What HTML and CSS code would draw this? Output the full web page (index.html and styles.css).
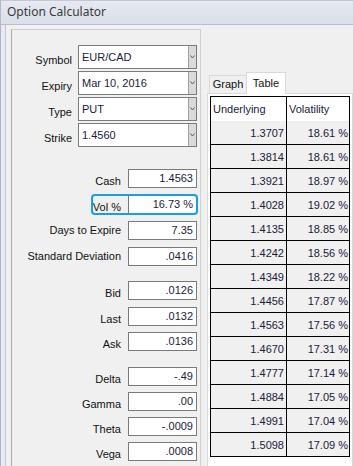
FILE: index.html
```html
<!DOCTYPE html>
<html lang="en">
<head>
    <meta charset="UTF-8">
    <meta name="viewport" content="width=device-width, initial-scale=1.0">
    <title>Option Calculator</title>
    <link rel="stylesheet" href="styles.css">
</head>
<body>
    <div class="window">
        <div class="titlebar">Option Calculator</div>
        <div class="client">
            <div class="content">
                <div class="panel">
                    <div class="combo-row">
                        <span class="lbl">Symbol</span>
                        <div class="combo"><span class="combo-text">EUR/CAD</span><span class="drop"><svg width="5" height="4" viewBox="0 0 5 4"><polyline points="0.5,0.5 2.5,3 4.5,0.5" fill="none" stroke="#5a5a5a"/></svg></span></div>
                    </div>
                    <div class="combo-row">
                        <span class="lbl">Expiry</span>
                        <div class="combo"><span class="combo-text">Mar 10, 2016</span><span class="drop"><svg width="5" height="4" viewBox="0 0 5 4"><polyline points="0.5,0.5 2.5,3 4.5,0.5" fill="none" stroke="#5a5a5a"/></svg></span></div>
                    </div>
                    <div class="combo-row">
                        <span class="lbl">Type</span>
                        <div class="combo"><span class="combo-text">PUT</span><span class="drop"><svg width="5" height="4" viewBox="0 0 5 4"><polyline points="0.5,0.5 2.5,3 4.5,0.5" fill="none" stroke="#5a5a5a"/></svg></span></div>
                    </div>
                    <div class="combo-row">
                        <span class="lbl">Strike</span>
                        <div class="combo"><span class="combo-text">1.4560</span><span class="drop"><svg width="5" height="4" viewBox="0 0 5 4"><polyline points="0.5,0.5 2.5,3 4.5,0.5" fill="none" stroke="#5a5a5a"/></svg></span></div>
                    </div>

                    <div class="group g1">
                        <div class="field"><span class="lbl">Cash</span><span class="box">1.4563</span></div>
                        <div class="field vol"><span class="hl"><span class="lbl">Vol %</span><span class="box">16.73 %</span></span></div>
                        <div class="field mid"><span class="lbl">Days to Expire</span><span class="box">7.35</span></div>
                        <div class="field mid"><span class="lbl">Standard Deviation</span><span class="box">.0416</span></div>
                    </div>
                    <div class="group g2">
                        <div class="field"><span class="lbl">Bid</span><span class="box">.0126</span></div>
                        <div class="field"><span class="lbl">Last</span><span class="box">.0132</span></div>
                        <div class="field"><span class="lbl">Ask</span><span class="box">.0136</span></div>
                    </div>
                    <div class="group g3">
                        <div class="field"><span class="lbl">Delta</span><span class="box">-.49</span></div>
                        <div class="field"><span class="lbl">Gamma</span><span class="box">.00</span></div>
                        <div class="field"><span class="lbl">Theta</span><span class="box">-.0009</span></div>
                        <div class="field"><span class="lbl">Vega</span><span class="box">.0008</span></div>
                    </div>
                </div>

                <div class="tabs">
                    <div class="tab-strip">
                        <span class="tab">Graph</span>
                        <span class="tab active">Table</span>
                    </div>
                    <div class="tab-page">
                        <div class="grid">
                            <div class="row head"><span>Underlying</span><span>Volatility</span></div>
                            <div class="row"><span>1.3707</span><span>18.61 %</span></div>
                            <div class="row"><span>1.3814</span><span>18.61 %</span></div>
                            <div class="row"><span>1.3921</span><span>18.97 %</span></div>
                            <div class="row"><span>1.4028</span><span>19.02 %</span></div>
                            <div class="row"><span>1.4135</span><span>18.85 %</span></div>
                            <div class="row"><span>1.4242</span><span>18.56 %</span></div>
                            <div class="row"><span>1.4349</span><span>18.22 %</span></div>
                            <div class="row"><span>1.4456</span><span>17.87 %</span></div>
                            <div class="row"><span>1.4563</span><span>17.56 %</span></div>
                            <div class="row"><span>1.4670</span><span>17.31 %</span></div>
                            <div class="row"><span>1.4777</span><span>17.14 %</span></div>
                            <div class="row"><span>1.4884</span><span>17.05 %</span></div>
                            <div class="row"><span>1.4991</span><span>17.04 %</span></div>
                            <div class="row"><span>1.5098</span><span>17.09 %</span></div>
                        </div>
                    </div>
                </div>
            </div>
        </div>
    </div>
</body>
</html>
```

FILE: styles.css
```css
* {
    box-sizing: border-box;
}
html, body {
    margin: 0;
}
body {
    font-family: "Liberation Sans", Arial, sans-serif;
    font-size: 11px;
    color: #111;
    background: #f0f0f0;
}
.window {
    width: 353px;
    height: 466px;
    overflow: hidden;
    display: flex;
    flex-direction: column;
}
.titlebar {
    height: 24px;
    flex-shrink: 0;
    border-top: 1px solid #c3c7d6;
    border-left: 1px solid #b4b8cb;
    background: linear-gradient(#e6e9f0, #dadfe8);
    font-family: "Noto Sans", sans-serif;
    font-size: 12px;
    color: #3a3a3a;
    padding-left: 6px;
    line-height: 22px;
}
.client {
    flex: 1;
    display: flex;
    border-top: 1px solid #b9bdcf;
    border-left: 1px solid #b1b4c9;
    background: #e8e9f1;
    padding-left: 4px;
}
.content {
    flex: 1;
    display: flex;
    border-left: 1px solid #c4c6d7;
    background: #f0f0f0;
    padding: 4px 0 0 5px;
}

/* left group box */
.panel {
    width: 190px;
    height: 460px;
    flex-shrink: 0;
    border: 1px solid #d0d0d0;
    border-left-color: #a8a8a8;
    padding: 15px 3px 0 0;
}
.combo-row {
    display: flex;
    height: 24px;
    margin-bottom: 2px;
}
.combo-row .lbl {
    width: 60px;
    margin-right: 6px;
    text-align: right;
    align-self: flex-end;
    line-height: 13px;
    padding-bottom: 2px;
}
.combo {
    width: 119px;
    display: flex;
    align-items: center;
    border: 1px solid #7a7a7a;
    background: #fff;
    color: #1a1a3a;
}
.combo-text {
    flex: 1;
    padding-left: 3px;
}
.drop {
    width: 8px;
    align-self: stretch;
    display: flex;
    align-items: center;
    justify-content: center;
    background: #dadada;
    border-left: 1px solid #a0a0a0;
}
.group {
    display: flex;
    flex-direction: column;
}
.g1 {
    margin-top: 22px;
    gap: 7px;
}
.g2 {
    margin-top: 15px;
    gap: 6.5px;
}
.g3 {
    margin-top: 16px;
    gap: 6px;
}
.field {
    display: flex;
    height: 19px;
}
.field .lbl {
    flex: 1;
    text-align: right;
    margin-right: 7px;
    align-self: flex-end;
    line-height: 13px;
}
.field.mid .lbl {
    align-self: center;
}
.box {
    width: 69px;
    border: 1px solid #7a7a7a;
    background: #fff;
    text-align: right;
    padding-right: 3px;
    line-height: 17px;
    color: #1a1a3a;
}
.field.vol {
    justify-content: flex-end;
}
.hl {
    width: 105px;
    display: flex;
    outline: 2px solid #1a9ee2;
    outline-offset: -1px;
    border-radius: 3px;
}

/* tab control */
.tabs {
    flex: 1;
    display: flex;
    flex-direction: column;
    margin-left: 6px;
    padding-top: 43px;
}
.tab-strip {
    display: flex;
    align-items: flex-end;
    height: 21px;
    padding-left: 2px;
    position: relative;
    z-index: 1;
}
.tab {
    width: 37px;
    height: 18px;
    border: 1px solid #d9d9d9;
    border-bottom: none;
    border-right: none;
    background: #f0f0f0;
    text-align: center;
    line-height: 17px;
}
.tab.active {
    width: 40px;
    height: 22px;
    border-right: 1px solid #d9d9d9;
    background: #fff;
    margin-bottom: -1px;
    line-height: 20px;
}
.tab-page {
    flex: 1;
    border: 1px solid #d9d9d9;
    background: #fff;
    padding: 2px 0 0 2px;
}
.grid {
    width: 140px;
    border: 1px solid #000;
    border-bottom: none;
}
.row {
    display: flex;
    height: 24px;
    border-bottom: 1px solid #000;
    background: #f0f0f0;
    color: #1a1a3a;
}
.row span {
    display: flex;
    align-items: center;
    justify-content: flex-end;
    padding-right: 2px;
}
.row span:first-child {
    width: 76px;
    border-right: 1px solid #000;
}
.row span:last-child {
    flex: 1;
    padding-right: 1px;
}
.row.head {
    border-bottom: none;
    background: #fff;
}
.row.head span {
    justify-content: flex-start;
    padding-left: 2px;
}
```
